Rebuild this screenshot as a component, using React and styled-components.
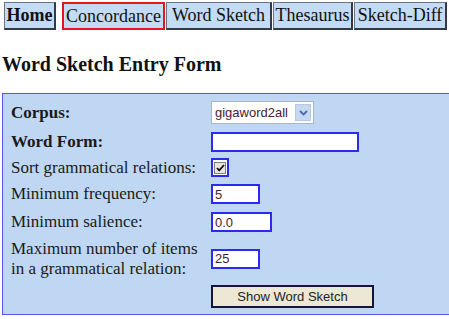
import styled, { createGlobalStyle } from "styled-components";

const Global = createGlobalStyle`
  body {
    margin: 0;
    background: #fff;
    font-family: "Liberation Serif", "Times New Roman", serif;
    color: #111;
    overflow: hidden;
  }
`;

const Page = styled.div`
  width: 449px;
  height: 319px;
  overflow: hidden;
`;

const TabBar = styled.nav`
  display: flex;
  padding: 2px 0 0 4px;
  gap: 1px;
`;

const Tab = styled.a`
  display: flex;
  align-items: center;
  justify-content: center;
  width: ${(p) => p.$w}px;
  height: 28px;
  box-sizing: border-box;
  padding: 0;
  margin-right: ${(p) => (p.$gap ? "5px" : "0")};
  background: #c4dbf5;
  font-size: 18px;
  font-weight: ${(p) => (p.$bold ? "bold" : "normal")};
  color: #111;
  white-space: nowrap;
  border: ${(p) => (p.$active ? "2px solid #e8141c" : "1px solid #6b7480")};
  border-right-color: ${(p) => (p.$active ? "#e8141c" : "#333a44")};
  border-bottom-color: ${(p) => (p.$active ? "#e8141c" : "#333a44")};
  border-right-width: 2px;
  border-bottom-width: 2px;
`;

const Heading = styled.h2`
  margin: 23px 0 0 2px;
  font-size: 20px;
  line-height: 22px;
  font-weight: bold;
`;

const Panel = styled.form`
  margin: 18px 0 0 2px;
  width: 470px;
  height: 222px;
  box-sizing: border-box;
  border: 1px solid #5555f5;
  background: #bfd7f2;
  padding: 5px 0 0 8px;
  display: grid;
  grid-template-columns: 200px auto;
  grid-template-rows: 27px 31px 21px 32px 24px 49px 26px;
  align-items: center;
  justify-items: start;
`;

const Label = styled.label`
  font-size: 17px;
  line-height: 20px;
  font-weight: ${(p) => (p.$bold ? "bold" : "normal")};
  color: #1a1a1a;
`;

const SelectBox = styled.div`
  position: relative;
  width: 103px;
  height: 23px;
  box-sizing: border-box;
  border: 1px solid #a9b6c4;
  background: #fff;
`;

const Select = styled.select`
  appearance: none;
  border: none;
  background: transparent;
  width: 100%;
  height: 100%;
  padding: 0 0 0 3px;
  font-family: "Liberation Sans", Arial, sans-serif;
  font-size: 13px;
  color: #4a2030;
  outline: none;
`;

const Arrow = styled.span`
  position: absolute;
  right: 2px;
  top: 2px;
  width: 16px;
  height: 17px;
  background: #c7d8f2;
  border: 1px solid #b7c9e4;
  box-sizing: border-box;
  display: flex;
  align-items: center;
  justify-content: center;
  pointer-events: none;
`;

const TextInput = styled.input`
  width: ${(p) => p.$w}px;
  height: 20px;
  box-sizing: border-box;
  border: 2px solid #2a2af0;
  background: #fff;
  padding: 0 2px;
  font-family: "Liberation Sans", Arial, sans-serif;
  font-size: 13px;
  color: #4a2030;
  outline: none;
`;

const CheckOuter = styled.span`
  width: 18px;
  height: 19px;
  box-sizing: border-box;
  border: 2px solid #2a2af0;
  background: #fff;
  display: flex;
  align-items: center;
  justify-content: center;
`;

const CheckInner = styled.span`
  width: 12px;
  height: 12px;
  box-sizing: border-box;
  border: 1px solid #7a8088;
  background: #eae6dc;
  display: flex;
  align-items: center;
  justify-content: center;
`;

const ButtonRow = styled.div`
  grid-column: 2;
`;

const SubmitButton = styled.button`
  width: 163px;
  height: 23px;
  box-sizing: border-box;
  border: 2px solid #14143c;
  background: #ede7d6;
  font-family: "Liberation Sans", Arial, sans-serif;
  font-size: 13px;
  color: #222;
  padding: 0;
`;

const tabs = [
  { name: "Home", bold: true, gap: true, w: 52 },
  { name: "Concordance", active: true, w: 103 },
  { name: "Word Sketch", w: 106 },
  { name: "Thesaurus", w: 80 },
  { name: "Sketch-Diff", w: 93 },
];

export default function App() {
  return (
    <Page>
      <Global />
      <TabBar>
        {tabs.map((t) => (
          <Tab key={t.name} $w={t.w} $bold={t.bold} $active={t.active} $gap={t.gap}>
            {t.name}
          </Tab>
        ))}
      </TabBar>
      <Heading>Word Sketch Entry Form</Heading>
      <Panel onSubmit={(e) => e.preventDefault()}>
        <Label $bold>Corpus:</Label>
        <SelectBox>
          <Select defaultValue="gigaword2all">
            <option value="gigaword2all">gigaword2all</option>
          </Select>
          <Arrow>
            <svg width="9" height="6" viewBox="0 0 9 6">
              <path d="M1 1l3.5 3.5L8 1" fill="none" stroke="#4b6aa8" strokeWidth="1.8" />
            </svg>
          </Arrow>
        </SelectBox>

        <Label $bold>Word Form:</Label>
        <TextInput $w={148} />

        <Label>Sort grammatical relations:</Label>
        <CheckOuter>
          <CheckInner>
            <svg width="9" height="8" viewBox="0 0 9 8">
              <path d="M1 4l2.2 2.4L8 1" fill="none" stroke="#111" strokeWidth="1.8" />
            </svg>
          </CheckInner>
        </CheckOuter>

        <Label>Minimum frequency:</Label>
        <TextInput $w={49} defaultValue="5" />

        <Label>Minimum salience:</Label>
        <TextInput $w={61} defaultValue="0.0" />

        <Label>
          Maximum number of items
          <br />
          in a grammatical relation:
        </Label>
        <TextInput $w={49} defaultValue="25" />

        <ButtonRow>
          <SubmitButton type="submit">Show Word Sketch</SubmitButton>
        </ButtonRow>
      </Panel>
    </Page>
  );
}
